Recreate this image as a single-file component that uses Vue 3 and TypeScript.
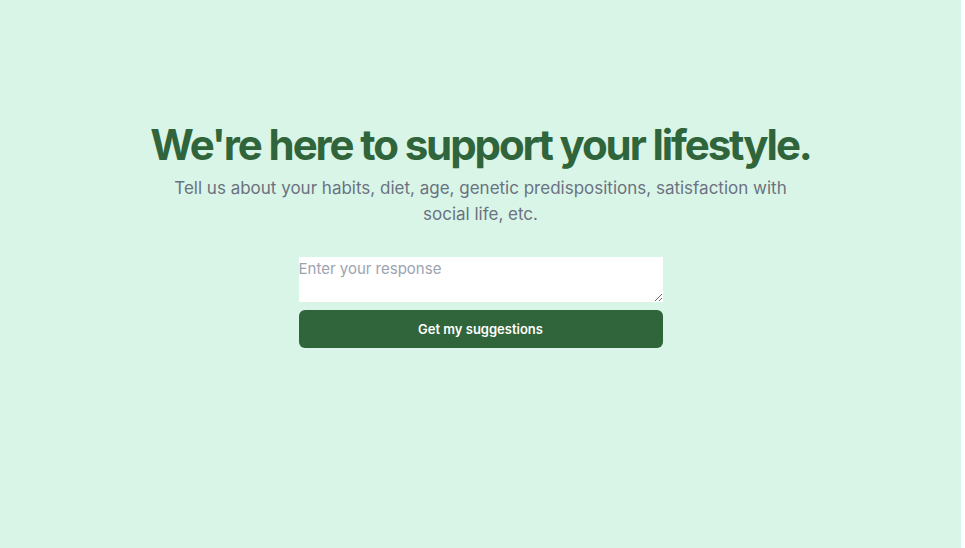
<script setup lang="ts">
import { ref } from 'vue'

const response = ref<string>('')
</script>

<template>
  <main class="page">
    <section class="hero">
      <h1 class="title">We're here to support your lifestyle.</h1>
      <p class="subtitle">
        Tell us about your habits, diet, age, genetic predispositions, satisfaction with social life, etc.
      </p>
    </section>
    <form class="form" @submit.prevent>
      <textarea
        v-model="response"
        class="field"
        rows="2"
        aria-label="Your response"
        placeholder="Enter your response"
      ></textarea>
      <button class="submit" type="submit">Get my suggestions</button>
    </form>
  </main>
</template>

<style>
body {
  background: #fff;
}
</style>

<style scoped>
.page {
  box-sizing: border-box;
  min-height: 100vh;
  margin-right: 4px;
  padding: 121px 24px 48px;
  display: flex;
  flex-direction: column;
  align-items: center;
  gap: 30px;
  background: #d9f5e8;
  font-family: Inter, 'Liberation Sans', sans-serif;
}

.hero {
  width: 100%;
  max-width: 720px;
  text-align: center;
}

.title {
  margin: 0;
  color: #30643a;
  font-size: 42px;
  line-height: 48px;
  font-weight: 700;
  letter-spacing: -0.05em;
}

.subtitle {
  max-width: 640px;
  margin: 6px auto 0;
  color: #6b7280;
  font-size: 17px;
  line-height: 26px;
}

.form {
  width: 100%;
  max-width: 364px;
  display: flex;
  flex-direction: column;
  gap: 8px;
}

.field {
  box-sizing: border-box;
  width: 100%;
  height: 45px;
  margin: 0;
  padding: 0;
  border: 0;
  background: #fff;
  color: #111827;
  font: 15px/24px Inter, sans-serif;
  resize: vertical;
}

.field::placeholder {
  color: #9ca3af;
}

.submit {
  height: 38px;
  border: 0;
  border-radius: 6px;
  background: #30643a;
  color: #fff;
  font: 600 13px/20px Inter, sans-serif;
  cursor: pointer;
}
</style>
